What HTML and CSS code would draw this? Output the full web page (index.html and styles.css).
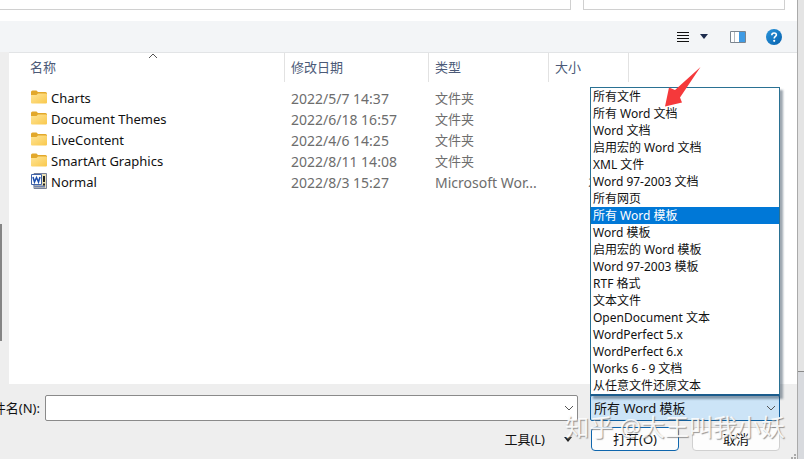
FILE: index.html
```html
<!DOCTYPE html>
<html lang="zh-CN">
<head>
  <meta charset="UTF-8">
  <meta name="viewport" content="width=device-width, initial-scale=1">
  <title>打开</title>
  <link rel="stylesheet" href="styles.css">
</head>
<body>
  <svg class="symbols" aria-hidden="true">
    <defs>
      <linearGradient id="folderFill" x1="0" y1="0" x2="1" y2="1">
        <stop offset="0" stop-color="#ffe597"/>
        <stop offset="1" stop-color="#f9c84c"/>
      </linearGradient>
      <linearGradient id="helpFill" x1="0" y1="0" x2="1" y2="1">
        <stop offset="0" stop-color="#2b96dc"/>
        <stop offset="1" stop-color="#0560ad"/>
      </linearGradient>
    </defs>
    <symbol id="folder" viewBox="0 0 16 14">
      <path d="M0 2q0-1.500 1.500-1.500h4l1.500 1.500h7.500q1.500 0 1.500 1.500v4H0z" fill="#e2a82b"/>
      <path d="M0 5h5.500l1.500-1.500h8q1 0 1 1v8q0 1-1 1H1q-1 0-1-1z" fill="url(#folderFill)"/>
    </symbol>
    <symbol id="chevron" viewBox="0 0 10 6">
      <path d="M1 1l4 4 4-4" fill="none" stroke="#555" stroke-width="1"/>
    </symbol>
  </svg>

  <div class="dialog">
    <div class="address-row">
      <div class="address-box"></div>
      <div class="search-box"></div>
    </div>

    <div class="toolbar">
      <button class="tool view" aria-label="更改视图">
        <svg width="12" height="12"><path d="M0 1.500h12M0 4.500h12M0 7.500h12M0 10.500h12" stroke="#111"/></svg>
      </button>
      <button class="tool more" aria-label="更多选项">
        <svg width="8" height="5"><path d="M0 0h8L4 5z" fill="#1d2c4d"/></svg>
      </button>
      <button class="tool preview" aria-label="显示预览窗格">
        <svg width="16" height="12">
          <path d="M.5.5h15v11H.5z" fill="#fff" stroke="#7b858f"/>
          <path d="M4.500 1v10" stroke="#b4bac0"/>
          <path d="M9 1h6v10H9z" fill="#3f9be4"/>
        </svg>
      </button>
      <button class="tool help" aria-label="帮助">
        <svg width="16" height="16">
          <circle cx="8" cy="8" r="8" fill="url(#helpFill)"/>
          <path d="M5.800 6.200c0-3 4.600-2.900 4.600-.2 0 1.500-2.200 1.500-2.200 3.500" fill="none" stroke="#fff" stroke-width="1.600"/>
          <circle cx="8.200" cy="11.800" r="1.100" fill="#fff"/>
        </svg>
      </button>
    </div>

    <div class="browser">
      <div class="sidebar"><div class="thumb"></div></div>
      <div class="files">
        <table>
          <colgroup>
            <col class="col-name"><col class="col-date"><col class="col-type"><col class="col-size"><col>
          </colgroup>
          <thead>
            <tr>
              <th class="name">名称<svg class="sort" width="10" height="6"><path d="M1 5l4-4 4 4" fill="none" stroke="#555"/></svg></th>
              <th>修改日期</th>
              <th>类型</th>
              <th>大小</th>
              <th class="rest"></th>
            </tr>
          </thead>
          <tbody>
            <tr><td class="name"><svg width="16" height="14"><use href="#folder"/></svg>Charts</td><td class="latin">2022/5/7 14:37</td><td>文件夹</td><td></td><td></td></tr>
            <tr><td class="name"><svg width="16" height="14"><use href="#folder"/></svg>Document Themes</td><td class="latin">2022/6/18 16:57</td><td>文件夹</td><td></td><td></td></tr>
            <tr><td class="name"><svg width="16" height="14"><use href="#folder"/></svg>LiveContent</td><td class="latin">2022/4/6 14:25</td><td>文件夹</td><td></td><td></td></tr>
            <tr><td class="name"><svg width="16" height="14"><use href="#folder"/></svg>SmartArt Graphics</td><td class="latin">2022/8/11 14:08</td><td>文件夹</td><td></td><td></td></tr>
            <tr>
              <td class="name"><svg class="doc" width="16" height="16">
                <path d="M3 .5h12.500v15H3z" fill="#e9dfb4" stroke="#77809a"/>
                <path d="M2 12.500h12v2H4z" fill="#6d82b5"/>
                <path d="M.5 1.500h10v10H.5z" fill="#fff" stroke="#3f62a8"/>
                <path d="M2 4l1.500 5L5.500 4.500 7.500 9 9 4" fill="none" stroke="#1d4fae" stroke-width="1.500"/>
                <path d="M13 3v6M13 10.500v2" stroke="#222" stroke-width="2"/>
              </svg>Normal</td>
              <td class="latin">2022/8/3 15:27</td><td class="latin">Microsoft Wor...</td><td class="size">20 KB</td><td></td>
            </tr>
          </tbody>
        </table>
      </div>
    </div>

    <div class="footer">
      <div class="file-row">
        <label class="file-label" for="fileName"><span>文件名(N):</span></label>
        <div class="combo file-name">
          <input type="text" id="fileName">
          <svg class="chevron" width="10" height="6"><use href="#chevron"/></svg>
        </div>
        <div class="combo file-type">
          <select id="fileType" aria-label="文件类型">
            <option>所有 Word 模板</option>
          </select>
          <svg class="chevron" width="10" height="6"><use href="#chevron"/></svg>
          <ul class="type-list" role="listbox" aria-label="文件类型">
            <li role="option">所有文件</li>
            <li role="option">所有 Word 文档</li>
            <li role="option">Word 文档</li>
            <li role="option">启用宏的 Word 文档</li>
            <li role="option">XML 文件</li>
            <li role="option">Word 97-2003 文档</li>
            <li role="option">所有网页</li>
            <li role="option" class="selected" aria-selected="true">所有 Word 模板</li>
            <li role="option">Word 模板</li>
            <li role="option">启用宏的 Word 模板</li>
            <li role="option">Word 97-2003 模板</li>
            <li role="option">RTF 格式</li>
            <li role="option">文本文件</li>
            <li role="option">OpenDocument 文本</li>
            <li role="option">WordPerfect 5.x</li>
            <li role="option">WordPerfect 6.x</li>
            <li role="option">Works 6 - 9 文档</li>
            <li role="option">从任意文件还原文本</li>
          </ul>
          <svg class="pointer" width="36" height="40"><path d="M35.500 0L10 23 4 20.500 0 39.500 17 35.500 15 30.500z" fill="#f5393b"/></svg>
        </div>
      </div>
      <div class="action-row">
        <button class="tools">工具(L)<svg width="8" height="5"><path d="M0 0h8L4 5z" fill="#222"/></svg></button>
        <div class="buttons">
          <button class="btn primary">打开(O)</button>
          <button class="btn">取消</button>
        </div>
      </div>
      <div class="watermark">知乎 @大王叫我小妖</div>
      <svg class="grip" width="8" height="8"><path d="M6 0h2v2H6zM3 3h2v2H3zM6 3h2v2H6zM0 6h2v2H0zM3 6h2v2H3zM6 6h2v2H6z" fill="#aaa"/></svg>
    </div>
  </div>
  <div class="backdrop"><div class="backdrop-end"></div></div>
</body>
</html>
```

FILE: styles.css
```css
* {
  margin: 0;
  padding: 0;
  box-sizing: border-box;
}
body {
  display: flex;
  min-height: 100vh;
  font-family: "Noto Sans", "Noto Sans CJK SC", sans-serif;
  font-size: 13px;
  line-height: 17px;
  color: #111;
  background: #fff;
  overflow: hidden;
}
button, input, select {
  font: inherit;
  color: inherit;
}
svg {
  flex: none;
}
.symbols {
  position: absolute;
  width: 0;
  height: 0;
}
.dialog {
  flex: 1;
  min-width: 0;
  display: flex;
  flex-direction: column;
}

/* Address bar and toolbar */
.address-row {
  display: flex;
  gap: 12px;
  height: 21px;
  padding: 0 12px 11px 0;
}
.address-box, .search-box {
  border: 1px solid #d0d0d0;
  border-top: none;
}
.address-box {
  flex: 1;
  border-left: none;
}
.search-box {
  width: 202px;
}
.toolbar {
  display: flex;
  justify-content: flex-end;
  align-items: center;
  height: 31px;
  padding-right: 15px;
  background: #f3f5f7;
}
.tool {
  display: flex;
  border: none;
  background: none;
}
.more {
  margin-left: 11px;
}
.preview {
  margin-left: 22px;
}
.help {
  margin-left: 20px;
}

/* File list */
.browser {
  flex: 1;
  display: flex;
}
.sidebar {
  width: 9px;
  padding-top: 172px;
  background: #eee;
}
.thumb {
  width: 2px;
  height: 117px;
  background: #858585;
}
.files {
  flex: 1;
  padding-left: 2px;
  border-top: 1px solid #e2e4e6;
}
table {
  width: 100%;
  table-layout: fixed;
  border-collapse: separate;
  border-spacing: 0;
}
.col-name {
  width: 274px;
}
.col-date {
  width: 144px;
}
.col-type {
  width: 120px;
}
.col-size {
  width: 80px;
}
th {
  position: relative;
  height: 29px;
  padding-left: 6px;
  border-right: 1px solid #e2e2e2;
  text-align: left;
  font-weight: normal;
  color: #4c5a78;
}
th.name {
  padding-left: 19px;
}
th.rest {
  border-right: none;
}
.sort {
  position: absolute;
  top: 0;
  left: 50%;
}
tbody::before {
  content: "";
  display: block;
  height: 6px;
}
td {
  height: 21px;
  padding-left: 6px;
  color: #6d6d6d;
  white-space: nowrap;
}
td.name {
  padding-left: 20px;
  color: #111;
}
td.latin {
  font-size: 14px;
}
td.name svg {
  margin-right: 4px;
  vertical-align: -1px;
}
td.name .doc {
  margin-top: -2px;
  vertical-align: -2px;
}
td.size {
  padding-right: 6px;
  text-align: right;
}

/* Footer */
.footer {
  position: relative;
  height: 75px;
  padding: 11px 17px 0 0;
  background: #eee;
}
.file-row {
  display: flex;
  align-items: center;
}
.file-label {
  display: flex;
  justify-content: flex-end;
  width: 45px;
  padding-right: 5px;
  overflow: hidden;
  white-space: nowrap;
}
.combo {
  position: relative;
  height: 26px;
}
.combo input, .combo select {
  display: block;
  width: 100%;
  height: 26px;
  padding: 0 24px 0 3px;
  border: 1px solid #8a8a8a;
  border-radius: 2px;
  background: #fff;
  appearance: none;
  outline: none;
}
.combo .chevron {
  position: absolute;
  right: 4px;
  top: 10px;
}
.file-name {
  flex: 1;
}
.file-type {
  width: 190px;
  margin-left: 12px;
}
.combo select {
  border-color: #0f5f9e;
  background: #cce4f7;
}
.type-list {
  position: absolute;
  left: 0;
  right: 0;
  bottom: 25px;
  border: 1px solid #2a7193;
  border-bottom: 2px solid #1b5c8c;
  background: #fff;
  box-shadow: 3px 3px 2px rgba(40, 60, 80, 0.45);
  font-size: 12px;
  list-style: none;
}
.type-list li {
  height: 17px;
  padding-left: 2px;
  white-space: nowrap;
}
.type-list .selected {
  background: #0078d7;
  color: #fff;
}
.pointer {
  position: absolute;
  left: 75px;
  bottom: 314px;
}
.action-row {
  display: flex;
  justify-content: flex-end;
  align-items: center;
  gap: 19px;
  padding-top: 6px;
}
.tools {
  display: flex;
  align-items: center;
  gap: 19px;
  border: none;
  background: none;
}
.buttons {
  display: flex;
  gap: 13px;
}
.btn {
  width: 88px;
  height: 24px;
  border: 1px solid #d0d0d0;
  border-radius: 4px;
  background: #fdfdfd;
}
.btn.primary {
  border-color: #0f66ad;
}
.watermark {
  position: absolute;
  right: 12px;
  top: 27px;
  font-size: 24px;
  line-height: 32px;
  color: rgba(255, 255, 255, 0.9);
  text-shadow: 1px 1px 1px rgba(110, 110, 110, 0.7);
  white-space: nowrap;
  pointer-events: none;
}
.grip {
  position: absolute;
  right: 1px;
  bottom: -3px;
}

/* Window behind the dialog */
.backdrop {
  display: flex;
  flex-direction: column;
  justify-content: flex-end;
  width: 7px;
  border-left: 1px solid #aaa;
  background: #e4e4e4;
}
.backdrop-end {
  height: 88px;
  border-top: 1px solid #8a8a8a;
  background: #d8dade;
}
```
